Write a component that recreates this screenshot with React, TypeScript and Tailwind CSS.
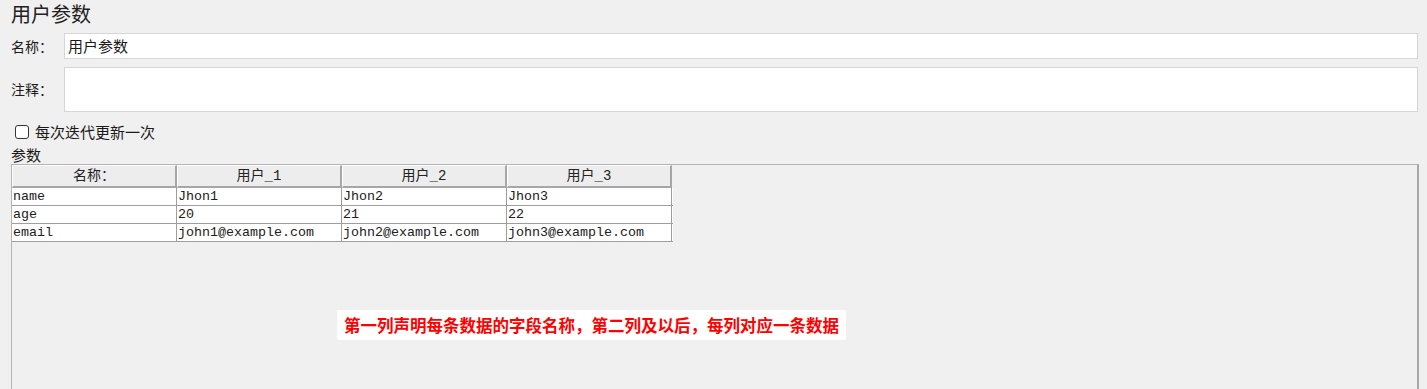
import React from "react";

const cjk = "font-['Microsoft_YaHei','Noto_Sans_CJK_SC',sans-serif]";
const mono = "font-['Liberation_Mono','Noto_Sans_CJK_SC',monospace]";

const columns = ["名称：", "用户_1", "用户_2", "用户_3"];

const rows = [
  ["name", "Jhon1", "Jhon2", "Jhon3"],
  ["age", "20", "21", "22"],
  ["email", "john1@example.com", "john2@example.com", "john3@example.com"],
];

export default function App() {
  return (
    <div className={`h-[389px] w-full overflow-hidden bg-[#f0f0f0] text-[#1a1a1a] ${cjk}`}>
      {/* Title */}
      <div className="flex h-[26px] items-center pl-[11px] pt-[2px] text-[20px] leading-none text-[#222]">
        用户参数
      </div>

      {/* Name */}
      <div className="mt-[7px] flex h-[26px] items-center">
        <div className="w-[64px] shrink-0 pl-[11px] text-[14px]">名称：</div>
        <div className="mr-[9px] flex h-full flex-1 items-center border border-[#d6d6d6] bg-white pl-[3px] text-[15px]">
          用户参数
        </div>
      </div>

      {/* Comment */}
      <div className="mt-[8px] flex h-[45px] items-center">
        <div className="w-[64px] shrink-0 pl-[11px] text-[14px]">注释：</div>
        <div className="mr-[9px] h-full flex-1 border border-[#d6d6d6] bg-white" />
      </div>

      {/* Checkbox */}
      <div className="mt-[10px] flex h-[19px] items-center pl-[15px]">
        <span className="h-[14px] w-[14px] rounded-[3px] border border-[#333] bg-white" />
        <span className="ml-[6px] text-[15px] leading-[19px]">每次迭代更新一次</span>
      </div>

      <div className="mt-[4px] h-[19px] pl-[11px] text-[15px] leading-[19px]">参数</div>

      {/* Parameter table panel */}
      <div className="relative ml-[11px] mr-[8px] h-[240px] border-t border-l border-[#b4b4b4] border-r-2 border-r-[#a8a8a8]">
        <div className={`w-[661px] ${mono}`}>
          <div className="flex h-[23px]">
            {columns.map((c) => (
              <div
                key={c}
                className="flex w-[165px] items-center justify-center border-t border-l border-white border-r-2 border-b-2 border-r-[#a6a6a6] border-b-[#a6a6a6] bg-[#ededed] text-[14px] text-[#222]"
              >
                {c}
              </div>
            ))}
          </div>
          {rows.map((r) => (
            <div key={r[0]} className="flex h-[18px] border-b border-[#9e9e9e] bg-white">
              {r.map((v, i) => (
                <div
                  key={i}
                  className="w-[165px] border-r border-[#9e9e9e] pl-[1px] text-[13.33px] leading-[17px] text-[#202020]"
                >
                  {v}
                </div>
              ))}
            </div>
          ))}
        </div>

        {/* Annotation */}
        <div className={`absolute left-[325px] top-[145px] flex h-[30px] w-[509px] items-center justify-center whitespace-nowrap rounded-[2px] bg-white text-[16.5px] font-bold text-[#ff0000] ${cjk}`}>
          第一列声明每条数据的字段名称，第二列及以后，每列对应一条数据
        </div>
      </div>
    </div>
  );
}
